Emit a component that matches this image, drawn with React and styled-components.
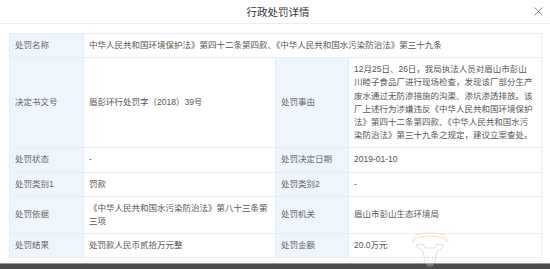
import React from "react";
import styled, { createGlobalStyle } from "styled-components";

const GlobalStyle = createGlobalStyle`
  html, body {
    margin: 0;
    padding: 0;
    background: #fff;
  }
  * {
    box-sizing: border-box;
  }
`;

const Dialog = styled.div`
  position: relative;
  width: 550px;
  height: 269px;
  display: flex;
  flex-direction: column;
  overflow: hidden;
  background: #fff;
  font-family: "Liberation Sans", "Noto Sans CJK SC", sans-serif;
`;

const Header = styled.div`
  height: 24px;
  display: grid;
  grid-template-columns: 1fr auto 1fr;
  align-items: center;
  border-bottom: 1px solid #eeeeee;
`;

const Title = styled.div`
  grid-column: 2;
  font-size: 10.5px;
  color: #333;
  padding-left: 6px;
`;

const Close = styled.button`
  justify-self: end;
  margin-right: 6px;
  width: 11px;
  height: 11px;
  padding: 0;
  border: 0;
  background: none;
  display: flex;
  align-items: center;
  justify-content: center;
  cursor: pointer;
`;

const Body = styled.div`
  padding: 9px 8px 0 9px;
`;

const Table = styled.div`
  display: grid;
  grid-template-columns: 73px 191px 72px 192px;
  gap: 1px;
  background: #e6eef7;
  border: 1px solid #e6eef7;
  font-size: 8.5px;
  line-height: 13.2px;
`;

const Label = styled.div`
  display: flex;
  align-items: center;
  padding: 5px 5px;
  background: #eff5fc;
  color: #666;
`;

const Value = styled.div`
  display: flex;
  align-items: center;
  padding: 5px 6px 5px 5px;
  background: #fff;
  color: #555;
  grid-column: ${(p) => (p.$wide ? "2 / 5" : "auto")};
`;

const Footer = styled.div`
  margin-top: auto;
  height: 6px;
  background: #4c4c4c;
  border-top: 1px solid #9a9a9a;
`;

const Watermark = styled.svg`
  position: absolute;
  left: 410px;
  top: 232px;
  opacity: 0.55;
  pointer-events: none;
`;

const rows = [
  { wide: true, label: "处罚名称", value: "中华人民共和国环境保护法》第四十二条第四款、《中华人民共和国水污染防治法》第三十九条" },
  {
    label: "决定书文号",
    value: "眉彭环行处罚字（2018）39号",
    label2: "处罚事由",
    value2:
      "12月25日、26日，我局执法人员对眉山市彭山川睦子食品厂进行现场检查，发现该厂部分生产废水通过无防渗措施的沟渠、渗坑渗透排放。该厂上述行为涉嫌违反《中华人民共和国环境保护法》第四十二条第四款、《中华人民共和国水污染防治法》第三十九条之规定，建议立案查处。",
  },
  { label: "处罚状态", value: "-", label2: "处罚决定日期", value2: "2019-01-10" },
  { label: "处罚类别1", value: "罚款", label2: "处罚类别2", value2: "-" },
  { label: "处罚依据", value: "《中华人民共和国水污染防治法》第八十三条第三项", label2: "处罚机关", value2: "眉山市彭山生态环境局" },
  { label: "处罚结果", value: "处罚款人民币贰拾万元整", label2: "处罚金额", value2: "20.0万元" },
];

export default function App() {
  return (
    <Dialog>
      <GlobalStyle />
      <Header>
        <Title>行政处罚详情</Title>
        <Close aria-label="关闭">
          <svg width="9" height="9" viewBox="0 0 9 9">
            <path d="M0.5 0.5 L8.5 8.5 M8.5 0.5 L0.5 8.5" stroke="#8a8a8a" strokeWidth="1" fill="none" />
          </svg>
        </Close>
      </Header>
      <Body>
        <Table>
          {rows.map((r) => (
            <React.Fragment key={r.label}>
              <Label>{r.label}</Label>
              <Value $wide={r.wide}>{r.value}</Value>
              {!r.wide && <Label>{r.label2}</Label>}
              {!r.wide && <Value>{r.value2}</Value>}
            </React.Fragment>
          ))}
        </Table>
      </Body>
      <Footer />
      <Watermark width="40" height="37" viewBox="0 0 40 37">
        <path d="M3 10 C2 2 12 1 20 1 C28 1 38 2 37 10 C34 5 28 4 20 4 C12 4 6 5 3 10 Z" fill="none" stroke="#f0c27a" strokeWidth="0.8" />
        <path d="M6 13 L13 12 L15 16 L25 16 L27 12 L34 13 L30 18 L27 19 L25 30 C23 34 17 34 15 30 L13 19 L10 18 Z" fill="none" stroke="#b9b9b9" strokeWidth="0.8" />
        <path d="M17 24 L18 29 M23 24 L22 29 M16 31 C18 33 22 33 24 31" fill="none" stroke="#c8c8c8" strokeWidth="0.7" />
        <ellipse cx="20" cy="33" rx="3" ry="1.5" fill="none" stroke="#f0c27a" strokeWidth="0.6" />
      </Watermark>
    </Dialog>
  );
}
